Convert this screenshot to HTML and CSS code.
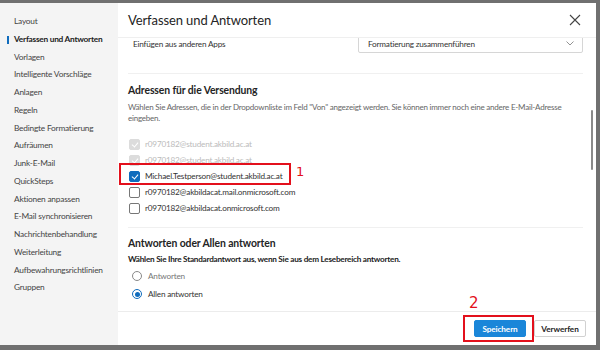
FILE: index.html
```html
<!DOCTYPE html>
<html lang="de">
<head>
    <meta charset="UTF-8">
    <title>Einstellungen</title>
    <link rel="stylesheet" href="styles.css">
</head>
<body>
    <div class="dialog">
        <!-- Seitenleiste -->
        <nav class="sidebar">
            <a>Layout</a>
            <a class="active">Verfassen und Antworten</a>
            <a>Vorlagen</a>
            <a>Intelligente Vorschläge</a>
            <a>Anlagen</a>
            <a>Regeln</a>
            <a>Bedingte Formatierung</a>
            <a>Aufräumen</a>
            <a>Junk-E-Mail</a>
            <a>QuickSteps</a>
            <a>Aktionen anpassen</a>
            <a>E-Mail synchronisieren</a>
            <a>Nachrichtenbehandlung</a>
            <a>Weiterleitung</a>
            <a>Aufbewahrungsrichtlinien</a>
            <a>Gruppen</a>
        </nav>

        <main class="main">
            <header class="header">
                <h1>Verfassen und Antworten</h1>
                <svg class="close" width="12" height="12" viewBox="0 0 12 12">
                    <path d="M1 1 L11 11 M11 1 L1 11" stroke="#444" stroke-width="1.1" fill="none"/>
                </svg>
            </header>

            <div class="content">
                <div class="inner">
                    <div class="row-select">
                        <span>Einfügen aus anderen Apps</span>
                        <div class="select">
                            <span>Formatierung zusammenführen</span>
                            <svg width="8" height="5" viewBox="0 0 8 5"><path d="M0.5 0.5 L4 4 L7.5 0.5" stroke="#777" stroke-width="0.8" fill="none"/></svg>
                        </div>
                    </div>

                    <section class="section">
                        <h2>Adressen für die Versendung</h2>
                        <p class="desc">Wählen Sie Adressen, die in der Dropdownliste im Feld "Von" angezeigt werden. Sie können immer noch eine andere E-Mail-Adresse eingeben.</p>
                        <ul class="checks">
                            <li class="disabled"><span class="box checked"></span>r0970182@student.akbild.ac.at</li>
                            <li class="disabled"><span class="box checked"></span>r0970182@student.akbild.ac.at</li>
                            <li class="marked"><span class="box checked"></span>Michael.Testperson@student.akbild.ac.at
                                <span class="annot-box one"></span><span class="annot-num one">1</span>
                            </li>
                            <li><span class="box"></span>r0970182@akbildacat.mail.onmicrosoft.com</li>
                            <li><span class="box"></span>r0970182@akbildacat.onmicrosoft.com</li>
                        </ul>
                    </section>

                    <section class="section">
                        <h2>Antworten oder Allen antworten</h2>
                        <p class="label">Wählen Sie Ihre Standardantwort aus, wenn Sie aus dem Lesebereich antworten.</p>
                        <ul class="radios">
                            <li class="off"><span class="radio"></span>Antworten</li>
                            <li><span class="radio on"></span>Allen antworten</li>
                        </ul>
                    </section>
                </div>
                <div class="scrollbar"></div>
            </div>

            <footer class="footer">
                <div class="save-wrap">
                    <button class="btn primary">Speichern</button>
                    <span class="annot-box two"></span><span class="annot-num two">2</span>
                </div>
                <button class="btn">Verwerfen</button>
            </footer>
        </main>
    </div>
    <div class="behind">Studierende / Dozenten.png</div>
</body>
</html>
```

FILE: styles.css
```css
/* allgemein */
* {
    box-sizing: border-box;
}

body {
    margin: 0;
    width: 600px;
    height: 350px;
    overflow: hidden;
    background-color: #707070;
    font-family: Lato, "Open Sans", sans-serif;
    color: #323130;
    padding-top: 3px;
}

.dialog {
    display: flex;
    width: 596px;
    height: 342px;
    background-color: #fff;
}

/* Seitenleiste */
.sidebar {
    width: 118px;
    background-color: #f4f4f4;
    display: flex;
    flex-direction: column;
    padding-top: 10px;
}

.sidebar a {
    position: relative;
    display: block;
    font-size: 8.3px;
    letter-spacing: -0.2px;
    line-height: 17.75px;
    padding-left: 14px;
    color: #444;
    white-space: nowrap;
}

.sidebar a.active {
    font-weight: 700;
    color: #222;
    letter-spacing: -0.25px;
}

.sidebar a.active::before {
    content: "";
    position: absolute;
    left: 7px;
    top: 5px;
    width: 2px;
    height: 8px;
    background-color: #0f6cbd;
}

/* Hauptbereich */
.main {
    flex: 1;
    display: flex;
    flex-direction: column;
    min-width: 0;
}

.header {
    height: 35px;
    display: flex;
    align-items: center;
    justify-content: space-between;
    padding: 0 15px 0 10px;
    border-bottom: 1px solid #efefef;
    position: relative;
    z-index: 1;
    background-color: #fff;
}

.header h1 {
    margin: 0;
    font-size: 13px;
    letter-spacing: -0.1px;
    font-weight: 400;
    color: #242424;
}

.content {
    position: relative;
    flex: 1;
    overflow: hidden;
    border-bottom: 1px solid #ececec;
}

.inner {
    margin-top: -4px;
    padding: 0 13px 0 10px;
    letter-spacing: -0.2px;
}

.row-select {
    display: flex;
    justify-content: space-between;
    align-items: center;
    padding-left: 5px;
    font-size: 8.2px;
    color: #333;
    height: 19px;
}

.select {
    width: 225px;
    height: 19px;
    border: 1px solid #d6d6d6;
    border-radius: 2px;
    display: flex;
    align-items: center;
    justify-content: space-between;
    padding: 0 8px 0 9px;
}

.section {
    border-top: 1px solid #f0f0f0;
    margin-top: 20px;
    padding-top: 8px;
}

.section h2 {
    margin: 0;
    font-size: 10.4px;
    letter-spacing: -0.1px;
    font-weight: 700;
    line-height: 16px;
    color: #242424;
}

.desc {
    margin: 4px 0 0;
    font-size: 8px;
    letter-spacing: -0.22px;
    line-height: 11px;
    color: #666;
}

.checks,
.radios {
    list-style: none;
    margin: 0;
    padding: 0;
}

.checks {
    margin-top: 12px;
}

.checks li {
    position: relative;
    display: flex;
    align-items: center;
    height: 16px;
    font-size: 8.2px;
    color: #333;
    white-space: nowrap;
}

.checks li.disabled {
    color: #bbb;
}

.box {
    width: 11px;
    height: 11px;
    margin: 0 5px 0 1px;
    border: 1px solid #777;
    border-radius: 2px;
    background-color: #fff;
    position: relative;
}

.box.checked {
    background-color: #0f6cbd;
    border-color: #0f6cbd;
}

.box.checked::after {
    content: "";
    position: absolute;
    left: 3px;
    top: 1px;
    width: 3px;
    height: 5px;
    border: solid #fff;
    border-width: 0 1px 1px 0;
    transform: rotate(40deg);
}

.disabled .box.checked {
    background-color: #dcdcdc;
    border-color: #dcdcdc;
}

.section + .section {
    margin-top: 11px;
    padding-top: 7px;
}

.label {
    margin: 3px 0 0;
    font-size: 8.2px;
    font-weight: 700;
    letter-spacing: -0.25px;
    color: #222;
}

.radios {
    margin-top: 3px;
}

.radios li {
    display: flex;
    align-items: center;
    height: 18px;
    font-size: 8.2px;
    color: #333;
    padding-left: 4px;
}

.radios li.off {
    color: #777;
}

.radio {
    width: 10px;
    height: 10px;
    border: 1px solid #888;
    border-radius: 50%;
    margin-right: 6px;
    position: relative;
}

.radio.on {
    border-color: #0f6cbd;
}

.radio.on::after {
    content: "";
    position: absolute;
    left: 1.5px;
    top: 1.5px;
    width: 5px;
    height: 5px;
    border-radius: 50%;
    background-color: #0f6cbd;
}

.scrollbar {
    position: absolute;
    right: 3px;
    top: 72px;
    width: 2px;
    height: 60px;
    background-color: #8a8a8a;
    border-radius: 1px;
}

/* Fußzeile */
.footer {
    height: 33px;
    display: flex;
    justify-content: flex-end;
    align-items: center;
    gap: 8px;
    padding-right: 10px;
}

.btn {
    height: 17px;
    width: 52px;
    padding: 0;
    font-family: inherit;
    font-size: 8.2px;
    letter-spacing: -0.1px;
    font-weight: 700;
    border: 1px solid #d1d1d1;
    border-radius: 2px;
    background-color: #fff;
    color: #242424;
}

.btn.primary {
    background-color: #1a86d9;
    border-color: #1a86d9;
    color: #fff;
}

.save-wrap {
    position: relative;
    display: flex;
}

/* Markierungen */
.annot-box {
    position: absolute;
    border: 2px solid #e3101c;
}

.annot-box.one {
    left: -9px;
    top: -5px;
    width: 172px;
    height: 22px;
}

.annot-num {
    position: absolute;
    color: #e3101c;
    font-size: 13px;
    letter-spacing: 0;
    font-family: "DejaVu Sans", sans-serif;
}

.annot-num.one {
    left: 168px;
    top: -4px;
}

.annot-box.two {
    left: -11px;
    top: -5px;
    width: 71px;
    height: 27px;
}

.annot-num.two {
    left: -5px;
    top: -26px;
    font-size: 15px;
}

.behind {
    font-size: 8px;
    color: #222;
    padding: 1px 0 0 3px;
    font-family: "Open Sans", sans-serif;
}
```
